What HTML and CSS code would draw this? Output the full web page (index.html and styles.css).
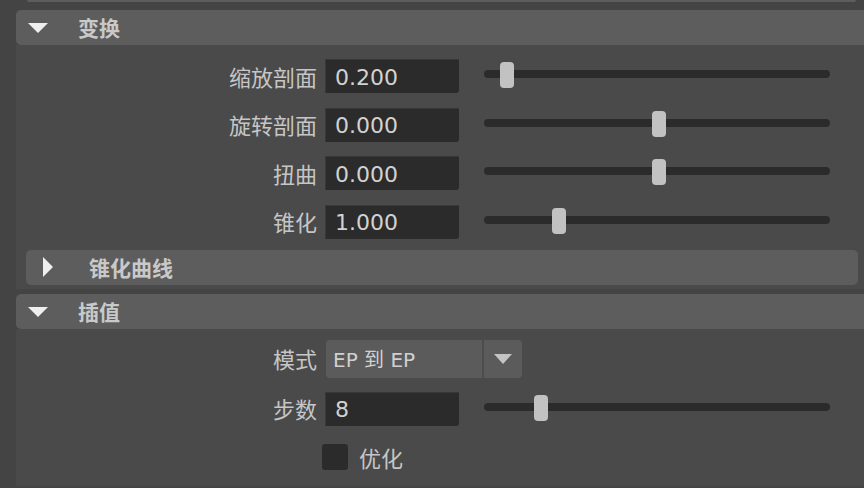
FILE: index.html
```html
<!DOCTYPE html>
<html lang="zh">
<head>
<meta charset="utf-8">
<title>属性</title>
<link rel="stylesheet" href="styles.css">
</head>
<body>
<div class="prev-tail"></div>

<section class="frame">
  <div class="frame-head">
    <span class="tri-down"></span>
    <span class="title">变换</span>
  </div>
  <div class="frame-body first">
    <div class="rows">
      <div class="row">
        <span class="label">缩放剖面</span>
        <span class="field">0.200</span>
        <div class="slider"><span class="track"></span><span class="thumb" style="left:16px"></span></div>
      </div>
      <div class="row">
        <span class="label">旋转剖面</span>
        <span class="field">0.000</span>
        <div class="slider"><span class="track"></span><span class="thumb" style="left:168px"></span></div>
      </div>
      <div class="row">
        <span class="label">扭曲</span>
        <span class="field">0.000</span>
        <div class="slider"><span class="track"></span><span class="thumb" style="left:168px"></span></div>
      </div>
      <div class="row">
        <span class="label">锥化</span>
        <span class="field">1.000</span>
        <div class="slider"><span class="track"></span><span class="thumb" style="left:68px"></span></div>
      </div>
    </div>
    <div class="sub-head">
      <span class="tri-right"></span>
      <span class="title">锥化曲线</span>
    </div>
  </div>
</section>

<section class="frame second">
  <div class="frame-head">
    <span class="tri-down"></span>
    <span class="title">插值</span>
  </div>
  <div class="frame-body interp">
    <div class="row row-mode">
      <span class="label">模式</span>
      <div class="dropdown">
        <span class="dd-text">EP 到 EP</span>
        <span class="dd-btn"><span class="dd-arrow"></span></span>
      </div>
    </div>
    <div class="row row-steps">
      <span class="label">步数</span>
      <span class="field">8</span>
      <div class="slider"><span class="track"></span><span class="thumb" style="left:50px"></span></div>
    </div>
    <div class="row row-check">
      <span class="label"></span>
      <span class="checkbox"></span>
      <span class="check-label">优化</span>
    </div>
  </div>
</section>
</body>
</html>
```

FILE: styles.css
```css
* { box-sizing: border-box; }

html, body {
  margin: 0;
  padding: 0;
}

body {
  width: 864px;
  height: 488px;
  overflow: hidden;
  background: #444444;
  font-family: "DejaVu Sans", "Noto Sans CJK SC", sans-serif;
  font-size: 22px;
  color: #c8c8c8;
}

.prev-tail {
  margin-left: 27px;
  width: 829px;
  height: 2px;
  background: #5d5d5d;
  border-radius: 0 0 3px 3px;
  margin-bottom: 8px;
}

.frame {
  margin-left: 16px;
}

.frame.second {
  margin-top: 5px;
}

.frame-head {
  height: 35px;
  background: #5d5d5d;
  border-radius: 5px 0 0 5px;
  display: flex;
  align-items: center;
  padding-left: 12px;
}

.title {
  font-family: "Noto Sans CJK SC", sans-serif;
  font-weight: bold;
  font-size: 21px;
  color: #c9c9c9;
  line-height: 1;
}

.tri-down {
  width: 0;
  height: 0;
  border-left: 10px solid transparent;
  border-right: 10px solid transparent;
  border-top: 10px solid #efefef;
  margin-right: 30px;
  margin-top: 1px;
}

.tri-right {
  width: 0;
  height: 0;
  border-top: 10px solid transparent;
  border-bottom: 10px solid transparent;
  border-left: 10px solid #efefef;
  margin-right: 36px;
}

.frame-body {
  background: #4a4a4a;
}

.frame-body.first {
  padding: 14px 0 4px 0;
}

.rows {
  display: flex;
  flex-direction: column;
  gap: 14.67px;
}

.row {
  display: flex;
  align-items: center;
  height: 34px;
}

.label {
  width: 301px;
  flex: none;
  text-align: right;
  font-family: "Noto Sans CJK SC", sans-serif;
  font-size: 22px;
  color: #c6c6c6;
  margin-right: 8px;
  line-height: 1;
  padding-bottom: 1px;
}

.field {
  width: 134px;
  height: 34px;
  flex: none;
  background: #2b2b2b;
  border-top: 1px solid #383838;
  border-left: 1px solid #383838;
  border-radius: 0 0 3px 0;
  padding-left: 9px;
  padding-top: 2px;
  display: flex;
  align-items: center;
  color: #d2d2d2;
  font-size: 22px;
  line-height: 1;
}

.slider {
  position: relative;
  width: 346px;
  height: 26px;
  margin-left: 25px;
  margin-top: -2px;
  flex: none;
}

.track {
  position: absolute;
  left: 0;
  right: 0;
  top: 8px;
  height: 8px;
  border-radius: 4px;
  background: #2b2b2b;
}

.thumb {
  position: absolute;
  top: 0;
  width: 14px;
  height: 26px;
  border-radius: 4px;
  background: #c2c2c2;
}

.sub-head {
  margin: 11px 6px 0 10px;
  height: 35px;
  background: #5d5d5d;
  border-radius: 5px;
  display: flex;
  align-items: center;
  padding-left: 17px;
}

.frame-body.interp {
  padding: 11px 0 16px 0;
  display: flex;
  flex-direction: column;
}

.row-mode {
  height: 38px;
}

.row-steps {
  margin-top: 14px;
}

.row-check {
  height: 26px;
  margin-top: 18px;
}

.dropdown {
  margin-left: 1px;
  width: 196px;
  height: 38px;
  background: #5b5b5b;
  border-radius: 4px;
  display: flex;
  align-items: stretch;
}

.dd-text {
  flex: 1;
  display: flex;
  align-items: center;
  padding-left: 7px;
  padding-top: 2px;
  font-size: 20px;
  color: #d0d0d0;
  border-right: 2px solid #4c4c4c;
  line-height: 1;
}

.dd-btn {
  width: 38px;
  flex: none;
  display: flex;
  align-items: center;
  justify-content: center;
}

.dd-arrow {
  width: 0;
  height: 0;
  border-left: 9.5px solid transparent;
  border-right: 9.5px solid transparent;
  border-top: 10px solid #c4c4c4;
}

.checkbox {
  width: 26px;
  height: 26px;
  margin-left: -3px;
  background: #2b2b2b;
  border-radius: 3px;
  flex: none;
}

.check-label {
  margin-left: 11px;
  font-family: "Noto Sans CJK SC", sans-serif;
  font-size: 22px;
  color: #c6c6c6;
  line-height: 1;
}
```
